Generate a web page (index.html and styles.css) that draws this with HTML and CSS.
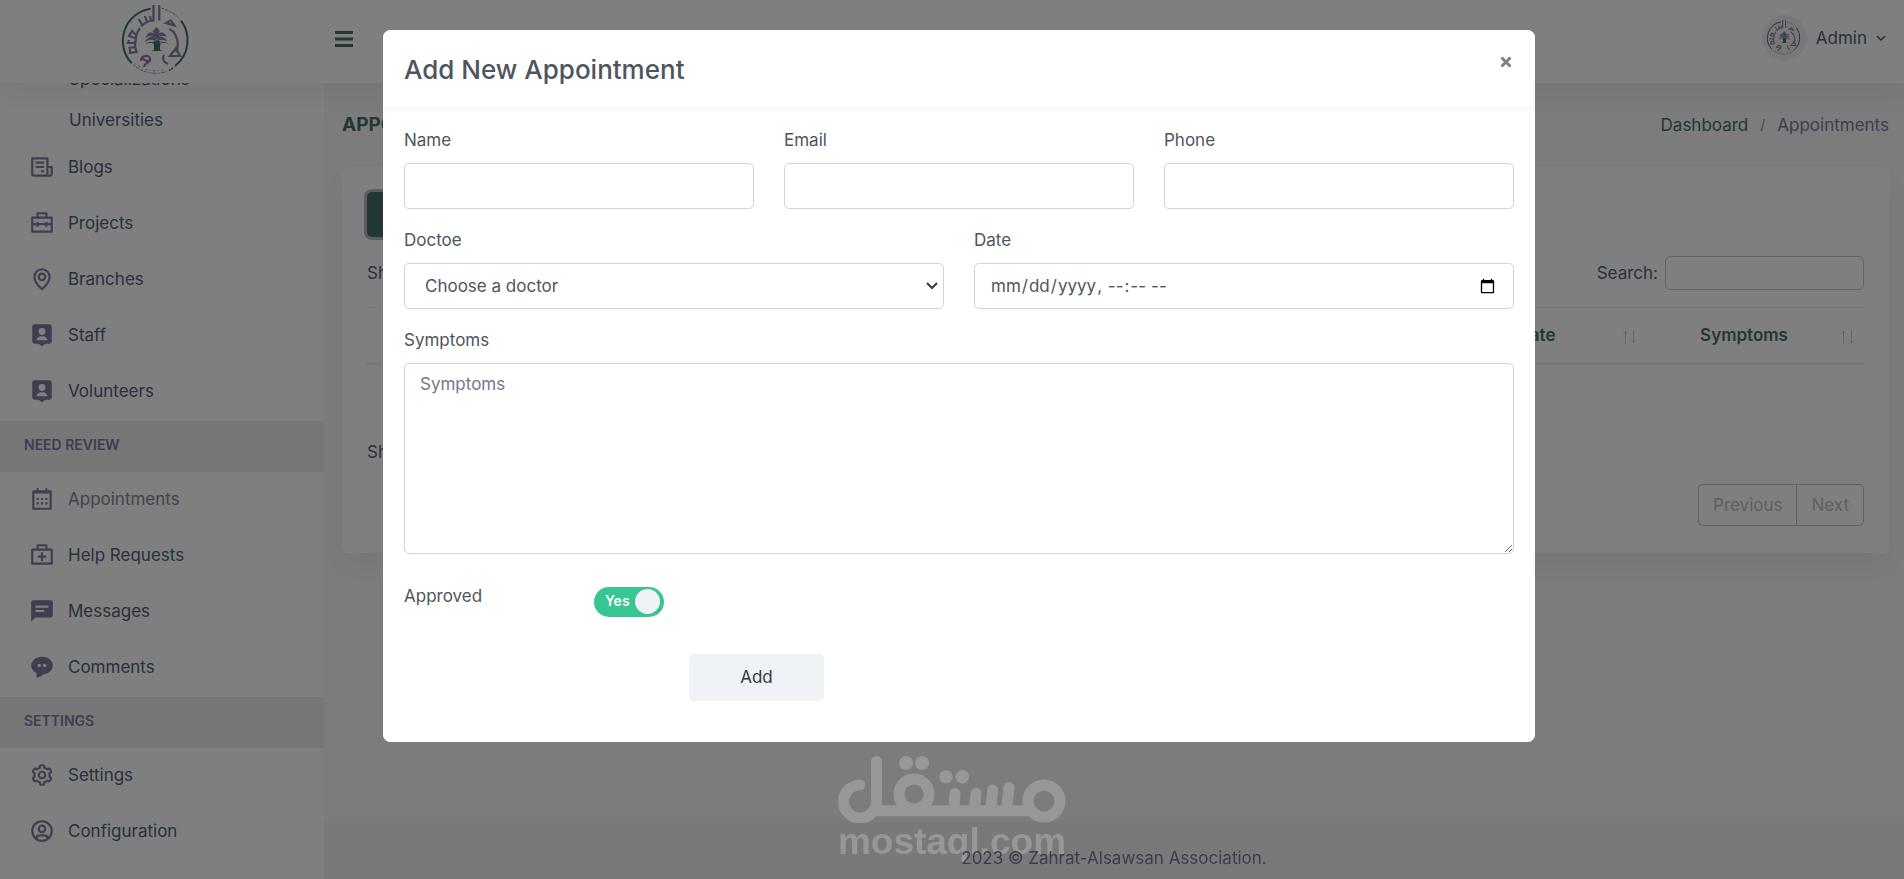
FILE: index.html
```html
<!DOCTYPE html>
<html lang="en">
<head>
<meta charset="utf-8">
<meta name="viewport" content="width=device-width, initial-scale=1">
<title>Appointments</title>
<link rel="stylesheet" href="styles.css">
</head>
<body>
<svg class="defs" aria-hidden="true">
  <symbol id="emblem" viewBox="0 0 72 76">
    <g fill="none" stroke="#46706a" stroke-width="2">
      <path d="M30.700 5.700A32.600 32.600 0 0 0 11.700 60.300"/>
      <path d="M61 17.700A32.600 32.600 0 0 1 55 63"/>
      <path d="M53 65l-4 2.500" stroke-dasharray="2 1"/>
    </g>
    <g fill="none" stroke="#8680a4" stroke-width="1" stroke-dasharray="2 1 3 1 1 1">
      <path d="M42 5.500Q52 8 60 16"/><path d="M13.500 62Q28 74 47 68.500"/>
      <path d="M15 60.500Q29 71 45 66.500" stroke-dasharray="1 3 2 2"/>
    </g>
    <g fill="none" stroke="#8680a4" stroke-width="2.200">
      <path d="M33.500 2V17.500C28 18 24 20 21 23.500M39.300 2V17.500"/>
      <path d="M31 18l-1-5M27 19l-2-6M22.500 22l-4-6"/>
      <path d="M20 25C16 30 15.500 34 15.500 40"/>
      <path d="M16 32l-4-4-3 5 6 2M15 40H8l1-3M15.500 44l-7 1M16 49l-6 1V46M15 38q0 8 2 12"/>
      <path d="M21 58c0-6 9-7 9-2 0 4-6 4-6 8M22 54q3 6 9 3"/>
      <path d="M46 20l5-2.500 3.500 5zM49 26c5 2 5 3 8 10M57 36q2 8-1 13M50 53l6-8 4 8z"/>
      <path d="M44 52q-3 6 4 9"/>
    </g>
    <path d="M36.700 24l3 4-1 2q6-2 8 4-5-2-8-1 6 1 9 5-7-2-9 0l-2-2-2 2q-3-3-10 1 3-5 9-6-4-1-8 2 2-7 8-5l-1-2z" fill="#8680a4"/>
    <path d="M33 39l4-2 4 2-1 4v4l3 1H31l3-1v-4zM25 41q6-4 10-1-5-1-10 1zM49 41q-6-4-10-1 5-1 10 1z" fill="#46706a"/>
  </symbol>
  <symbol id="person-pin" viewBox="0 0 24 24"><path fill="currentColor" fill-rule="evenodd" d="M5 2h14a2 2 0 0 1 2 2v14a2 2 0 0 1-2 2h-4l-3 2.500L9 20H5a2 2 0 0 1-2-2V4a2 2 0 0 1 2-2zM12 5.500a3.200 3.200 0 1 0 0 6.400 3.200 3.200 0 0 0 0-6.400zM7 16.800h10c0-2.200-2.500-3.600-5-3.600s-5 1.400-5 3.600z"/></symbol>
</svg>

<div class="app">
  <header class="topbar">
    <a class="brand" href="#" aria-label="Home"><svg><use href="#emblem"/></svg></a>
    <button class="burger" aria-label="Toggle menu"><svg viewBox="0 0 18 16"><path d="M0 1.500h18M0 8h18M0 14.500h18" stroke="currentColor" stroke-width="3"/></svg></button>
    <button class="user"><span class="avatar"><svg><use href="#emblem"/></svg></span>Admin<svg class="chev" viewBox="0 0 10 6"><path d="M1 1l4 4 4-4" fill="none" stroke="currentColor" stroke-width="1.600"/></svg></button>
  </header>

  <nav class="sidebar" aria-label="Main">
    <ul class="sub">
      <li><a href="#">Specializations</a></li>
      <li><a href="#">Universities</a></li>
    </ul>
    <ul class="menu">
      <li><a href="#"><svg viewBox="0 0 24 24"><path class="ln" d="M17.500 20H4a1 1 0 0 1-1-1V4h14v14.500a1.500 1.500 0 0 0 1.500 1.500h1a1.500 1.500 0 0 0 1.500-1.500V12h-4M6 8h8M6 12h8M11 16h3"/></svg>Blogs</a></li>
      <li><a href="#"><svg viewBox="0 0 24 24"><path class="ln" d="M3 7h18v13H3zM8 7V3h8v4M3 13h18M8 11v4.500M16 11v4.500"/></svg>Projects</a></li>
      <li><a href="#"><svg viewBox="0 0 24 24"><path class="ln" d="M12 21.500c-3-2.500-7-6.500-7-11.500a7 7 0 0 1 14 0c0 5-4 9-7 11.500z"/><circle class="ln" cx="12" cy="10" r="3"/></svg>Branches</a></li>
      <li><a href="#"><svg><use href="#person-pin"/></svg>Staff</a></li>
      <li><a href="#"><svg><use href="#person-pin"/></svg>Volunteers</a></li>
    </ul>
    <h2>NEED REVIEW</h2>
    <ul class="menu">
      <li><a class="active" href="#"><svg viewBox="0 0 24 24"><path class="ln" d="M4 5h16v16H4zM4 6h16M8 2v4M16 2v4"/><path class="ln" d="M7 12h2M11 12h2M15 12h2M7 16h2M11 16h2M15 16h2"/></svg>Appointments</a></li>
      <li><a href="#"><svg viewBox="0 0 24 24"><path class="ln" d="M3 7h18v13H3zM8 7V3h8v4M12 9.500v8M8 13.500h8"/></svg>Help Requests</a></li>
      <li><a href="#"><svg viewBox="0 0 24 24"><path fill="currentColor" fill-rule="evenodd" d="M4 2h16a2 2 0 0 1 2 2v12a2 2 0 0 1-2 2H6l-4 4V4a2 2 0 0 1 2-2zM6 7v2h12V7zM6 11v2h8v-2z"/></svg>Messages</a></li>
      <li><a href="#"><svg viewBox="0 0 24 24"><path fill="currentColor" fill-rule="evenodd" d="M12 2.500c5.600 0 10 3.600 10 8.200 0 4.500-4 7.800-9 8.200-1.600 1.500-3.500 2.600-6 3.100v-4.300C4 16.300 2 13.800 2 10.700c0-4.600 4.400-8.200 10-8.200zM9.500 9a1.600 1.600 0 1 0 0 3.200 1.600 1.600 0 0 0 0-3.200zM14.500 9a1.600 1.600 0 1 0 0 3.200 1.600 1.600 0 0 0 0-3.200z"/></svg>Comments</a></li>
    </ul>
    <h2>SETTINGS</h2>
    <ul class="menu">
      <li><a href="#"><svg viewBox="0 0 24 24"><path fill="currentColor" d="M12 16c2.206 0 4-1.794 4-4s-1.794-4-4-4-4 1.794-4 4 1.794 4 4 4zm0-6c1.084 0 2 .916 2 2s-.916 2-2 2-2-.916-2-2 .916-2 2-2z"/><path fill="currentColor" d="m2.845 16.136 1 1.730c.531.917 1.809 1.261 2.730.730l.529-.306A8.100 8.100 0 0 0 9 19.402V20c0 1.103.897 2 2 2h2c1.103 0 2-.897 2-2v-.598a8.132 8.132 0 0 0 1.896-1.111l.529.306c.923.530 2.198.188 2.731-.731l.999-1.729a2.001 2.001 0 0 0-.731-2.732l-.505-.292a7.718 7.718 0 0 0 0-2.224l.505-.292a2.002 2.002 0 0 0 .731-2.732l-.999-1.729c-.531-.920-1.808-1.265-2.731-.732l-.529.306A8.100 8.100 0 0 0 15 4.598V4c0-1.103-.897-2-2-2h-2c-1.103 0-2 .897-2 2v.598a8.132 8.132 0 0 0-1.896 1.111l-.529-.306c-.924-.531-2.200-.187-2.731.732l-.999 1.729a2.001 2.001 0 0 0 .731 2.732l.505.292a7.683 7.683 0 0 0 0 2.223l-.505.292a2.003 2.003 0 0 0-.731 2.733zm3.326-2.758A5.703 5.703 0 0 1 6 12c0-.462.058-.926.170-1.378a.999.999 0 0 0-.470-1.108l-1.123-.650.998-1.729 1.145.662a.997.997 0 0 0 1.188-.142 6.071 6.071 0 0 1 2.384-1.399A1 1 0 0 0 11 5.300V4h2v1.300a1 1 0 0 0 .708.956 6.083 6.083 0 0 1 2.384 1.399.999.999 0 0 0 1.188.142l1.144-.661 1 1.729-1.124.649a1 1 0 0 0-.470 1.108c.112.452.170.916.170 1.378 0 .461-.058.925-.171 1.378a1 1 0 0 0 .471 1.108l1.123.649-.998 1.729-1.145-.661a.996.996 0 0 0-1.188.142 6.071 6.071 0 0 1-2.384 1.399A1 1 0 0 0 13 18.700l.002 1.300H11v-1.300a1 1 0 0 0-.708-.956 6.083 6.083 0 0 1-2.384-1.399.992.992 0 0 0-1.188-.141l-1.144.662-1-1.729 1.124-.651a1 1 0 0 0 .471-1.108z"/></svg>Settings</a></li>
      <li><a href="#"><svg viewBox="0 0 24 24"><circle class="ln" cx="12" cy="12" r="9"/><circle class="ln" cx="12" cy="10" r="3"/><path class="ln" d="M7 19c0-2 1.500-3 3-3h4c1.500 0 3 1 3 3"/></svg>Configuration</a></li>
    </ul>
  </nav>

  <main class="content">
    <div class="page-head">
      <h1>APPOINTMENTS</h1>
      <div class="crumbs"><a href="#">Dashboard</a><span class="sep">/</span><span class="here">Appointments</span></div>
    </div>
    <section class="card">
      <button class="new">Add New</button>
      <div class="tools">
        <span>Show 10 entries</span>
        <label class="search">Search:<input type="search"></label>
      </div>
      <table>
        <thead><tr><th>#</th><th>Name</th><th>Email</th><th>Phone</th><th>Doctor</th>
          <th class="col-date">Date<svg class="sort" viewBox="0 0 13 14"><path d="M2.500 14V1M.500 3.500L2.500 1l2 2.500M10.500 0v13M8.500 10.500l2 2.500 2-2.500"/></svg></th>
          <th class="col-symptoms">Symptoms<svg class="sort" viewBox="0 0 13 14"><path d="M2.500 14V1M.500 3.500L2.500 1l2 2.500M10.500 0v13M8.500 10.500l2 2.500 2-2.500"/></svg></th></tr></thead>
      </table>
      <p class="info">Showing 0 to 0 of 0 entries</p>
      <div class="pager"><button disabled>Previous</button><button disabled>Next</button></div>
    </section>
  </main>
  <footer class="footer"><span>2023 © Zahrat-Alsawsan Association.</span></footer>
</div>

<div class="overlay">
  <div class="watermark">
    <svg viewBox="0 0 228 67" fill="none" stroke="currentColor" stroke-width="11" stroke-linecap="round">
      <path d="M38.500 5.500V45A16.500 16.500 0 1 1 22 29M36 54.700H194"/>
      <circle cx="206" cy="45" r="16"/><circle cx="76" cy="38" r="15"/>
      <path d="M117 37.500l-1 15M138 37.500l-1.500 15M154.700 34l-1.700 18.500M171 31.500L168.700 52.500"/>
      <g fill="currentColor" stroke="none"><circle cx="68" cy="7" r="7"/><circle cx="84" cy="7" r="7"/><circle cx="108" cy="20.700" r="6.800"/><circle cx="124.300" cy="20.700" r="6.800"/></g>
    </svg>
    <span>mostaql.com</span>
  </div>
  <div class="modal" role="dialog" aria-labelledby="modal-title">
    <div class="modal-head">
      <h2 id="modal-title">Add New Appointment</h2>
      <button class="close" aria-label="Close"><svg viewBox="0 0 12 12"><path d="M1.500 1.500l9 9M10.500 1.500l-9 9" stroke="currentColor" stroke-width="3"/></svg></button>
    </div>
    <form class="form">
      <div class="field third"><label for="name">Name</label><input id="name" type="text"></div>
      <div class="field third"><label for="email">Email</label><input id="email" type="email"></div>
      <div class="field third"><label for="phone">Phone</label><input id="phone" type="tel"></div>
      <div class="field half"><label for="doctor">Doctoe</label><select id="doctor"><option>Choose a doctor</option></select></div>
      <div class="field half"><label for="date">Date</label><input id="date" type="datetime-local"></div>
      <div class="field full"><label for="symptoms">Symptoms</label><textarea id="symptoms" placeholder="Symptoms"></textarea></div>
      <label class="approved" for="approved">Approved</label>
      <div class="switch"><input id="approved" type="checkbox" checked><span>Yes</span></div>
      <button class="add" type="button">Add</button>
    </form>
  </div>
</div>
</body>
</html>
```
FILE: styles.css
```css
* { box-sizing: border-box; }
body {
  margin: 0;
  overflow: hidden;
  background: #f8f8f8;
  color: #4a5a62;
  font: 17px/24px Inter, "Noto Sans", sans-serif;
}
button, input, select, textarea { font: inherit; color: inherit; }
button { border: 0; background: none; padding: 0; }
a { color: inherit; text-decoration: none; }
ul { list-style: none; margin: 0; padding: 0; }
.defs { position: absolute; width: 0; height: 0; }

.app {
  display: grid;
  grid-template-columns: 324px 1fr;
  grid-template-rows: 83px 1fr 57px;
  height: 100vh;
}

.topbar {
  grid-area: 1 / 1 / 2 / 3;
  z-index: 1;
  display: flex;
  align-items: center;
  background: #fff;
  box-shadow: 0 12px 24px rgba(18, 38, 63, .06);
}
.brand { width: 324px; padding: 0 12px 2px 0; display: flex; justify-content: center; }
.brand svg { width: 72px; height: 76px; }
.burger { margin-left: 11px; padding-bottom: 6px; color: #46706a; display: flex; }
.burger svg { width: 18px; height: 16px; }
.user { margin-left: auto; margin-right: 18px; padding-bottom: 8px; display: flex; align-items: center; gap: 9px; color: #54617a; }
.avatar { width: 45px; height: 45px; border-radius: 50%; background: #f0f0f0; display: grid; place-items: center; }
.avatar svg { width: 36px; height: 38px; }
.chev { width: 10px; height: 6px; }

.sidebar {
  grid-area: 1 / 1 / 4 / 2;
  background: #fff;
  padding-top: 58px;
  overflow: hidden;
  color: #54617a;
}
.sub a { display: flex; align-items: center; height: 41px; padding-left: 69px; }
.menu { padding-bottom: 1px; }
.menu a { display: flex; align-items: center; gap: 13px; height: 56px; padding: 0 0 2px 29px; }
.menu .active { color: #8a84a4; }
.menu svg { width: 26px; height: 26px; color: #807a9c; }
.ln { fill: none; stroke: currentColor; stroke-width: 2; stroke-linejoin: round; }
.sidebar h2 { margin: 0; padding: 12px 24px 15px; background: #eee; color: #807a9c; font-size: 14px; font-weight: 600; }

.content { grid-area: 2 / 2; padding: 26px 15px 0 18px; }
.page-head { display: flex; justify-content: space-between; align-items: center; height: 32px; margin-bottom: 26px; }
h1 { margin: 0; font-size: 19px; font-weight: 700; color: #46706a; }
.crumbs { display: flex; gap: 12px; }
.crumbs a { color: #46706a; }
.sep { font-size: 14px; color: #94909f; }
.here { color: #807a9c; }

.card { padding: 25px 25px 27px; border-radius: 6px; background: #fff; box-shadow: 0 12px 24px rgba(18, 38, 63, .04); color: #54617a; }
.new { display: block; height: 45px; padding: 0 20px; border-radius: 5px; background: #46706a; color: #fff; box-shadow: 0 0 0 3px #b4bcc4; }
.tools { display: flex; justify-content: space-between; align-items: center; margin-top: 19px; }
.search { display: flex; align-items: center; gap: 7px; }
.search input { width: 199px; height: 34px; border: 1px solid #c4c8d0; border-radius: 5px; background: transparent; }
table { width: 100%; margin-top: 17px; table-layout: fixed; border-collapse: collapse; border-top: 1px solid #eee; border-bottom: 3px solid #eee; }
th { position: relative; height: 56px; padding: 0 22px 0 0; font-weight: 600; color: #46706a; }
.col-date { width: 197px; }
.col-symptoms { width: 218px; }
.sort { position: absolute; right: 10px; top: 22px; width: 13px; height: 14px; }
.sort path { fill: none; stroke: #ccc; }
.info { margin: 75px 0 20px; }
.pager { display: flex; justify-content: flex-end; }
.pager button { height: 42px; padding: 0 14px; border: 1px solid #c0c4cc; color: #bcc0c4; }
.pager button:first-child { border-right: 0; border-radius: 5px 0 0 5px; }
.pager button:last-child { border-radius: 0 5px 5px 0; }

.footer { grid-area: 3 / 2; display: flex; align-items: center; justify-content: center; padding-top: 15px; background: #f2f2f2; }
.footer span { position: relative; z-index: 3; color: #3d3b4c; }

.overlay { position: fixed; inset: 0; z-index: 2; padding: 30px 0 0 14px; background: rgba(0, 0, 0, .5); }
.watermark { position: absolute; left: 0; right: 0; top: 756px; display: flex; flex-direction: column; align-items: center; color: #979797; }
.watermark svg { width: 228px; height: 67px; }
.watermark span { font: bold 37px/38px "Liberation Sans", Arial, sans-serif; }

.modal { max-width: 1152px; margin: 0 auto; border: 1px solid #fff; border-radius: 7px; background: #fff; color: #4f555c; }
.modal-head { display: flex; justify-content: space-between; align-items: flex-start; padding: 20px; border-bottom: 1px solid #eff2f7; }
.modal-head h2 { margin: 0; font-size: 26px; line-height: 37px; font-weight: 500; }
.close { display: flex; padding: 5px 2px; color: #808080; }
.close svg { width: 12px; height: 12px; }
.form { display: grid; grid-template-columns: repeat(12, 1fr); gap: 20px 30px; padding: 20px 20px 40px; }
.field { display: flex; flex-direction: column; gap: 11px; }
.field label { line-height: 23px; }
.third { grid-column: span 4; }
.half { grid-column: span 6; }
.full { grid-column: span 12; }
.field input, .field select, .field textarea { width: 100%; height: 46px; padding: 0 15px; border: 1px solid #ced4da; border-radius: 5px; background: #fff; }
.field select {
  appearance: none;
  padding: 0 32px 0 20px;
  background: #fff url("data:image/svg+xml,%3Csvg xmlns='http://www.w3.org/2000/svg' width='12' height='8'%3E%3Cpath d='M1 1l5 5 5-5' fill='none' stroke='%23343a40' stroke-width='2'/%3E%3C/svg%3E") no-repeat right 5px center;
}
.field textarea { display: block; height: 191px; padding: 8px 15px; }
.field textarea::placeholder { color: #74788d; opacity: 1; }
.approved { grid-column: span 2; padding-top: 10px; }
.switch { grid-column: span 10; position: relative; width: 70px; height: 30px; margin-top: 13px; }
.switch input { appearance: none; display: block; width: 70px; height: 30px; margin: 0; border-radius: 15px; background: #38c592; }
.switch input::after { content: ""; position: absolute; top: 2px; right: 4px; width: 25px; height: 25px; border-radius: 50%; background: #eff2f7; }
.switch span { position: absolute; left: 11px; top: 2px; color: #fff; font-size: 14px; font-weight: 600; pointer-events: none; }
.add { grid-column: 4 / span 2; width: 135px; height: 47px; margin-top: 17px; padding-bottom: 2px; border-radius: 5px; background: #eff2f7; color: #343a40; }
```
